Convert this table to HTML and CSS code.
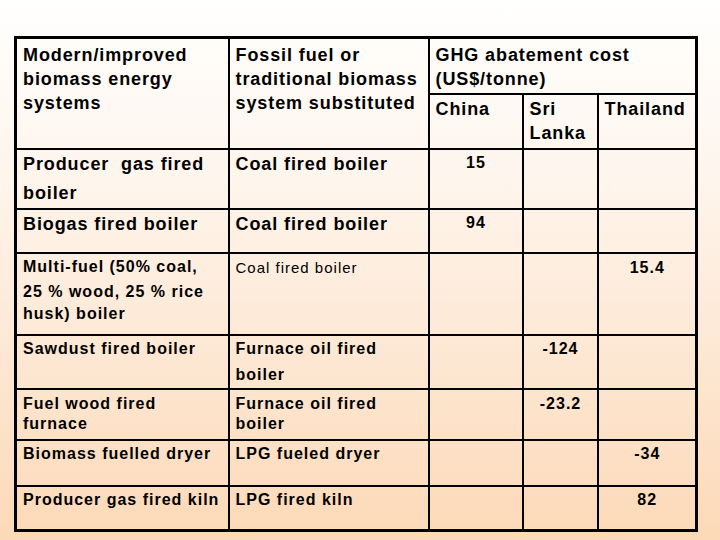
FILE: index.html
```html
<!DOCTYPE html>
<html>
<head>
<meta charset="utf-8">
<link rel="stylesheet" href="styles.css">
</head>
<body>
<table class="ghg">
  <colgroup>
    <col class="c1"><col class="c2"><col class="c3"><col class="c4"><col class="c5">
  </colgroup>
  <tr class="h1">
    <td rowspan="2" class="big">Modern/improved<br>biomass energy<br>systems</td>
    <td rowspan="2" class="big">Fossil fuel or<br>traditional biomass<br>system substituted</td>
    <td colspan="3" class="big">GHG abatement cost<br>(US$/tonne)</td>
  </tr>
  <tr class="h2">
    <td class="big">China</td>
    <td class="big">Sri<br>Lanka</td>
    <td class="big">Thailand</td>
  </tr>
  <tr class="r1">
    <td class="big tall">Producer&nbsp; gas fired<br>boiler</td>
    <td class="big tall">Coal fired boiler</td>
    <td class="num">15</td><td></td><td></td>
  </tr>
  <tr class="r2">
    <td class="big">Biogas fired boiler</td>
    <td class="big">Coal fired boiler</td>
    <td class="num">94</td><td></td><td></td>
  </tr>
  <tr class="r3">
    <td class="mid multi"><span class="l1">Multi-fuel (50% coal,</span><span class="l2">25 % wood, 25 % rice</span><span class="l3">husk) boiler</span></td>
    <td class="plain">Coal fired boiler</td>
    <td></td><td></td><td class="num">15.4</td>
  </tr>
  <tr class="r4">
    <td class="mid">Sawdust fired boiler</td>
    <td class="mid loose">Furnace oil fired<br>boiler</td>
    <td></td><td class="num">-124</td><td></td>
  </tr>
  <tr class="r5">
    <td class="mid tight">Fuel wood fired<br>furnace</td>
    <td class="mid tight">Furnace oil fired<br>boiler</td>
    <td></td><td class="num">-23.2</td><td></td>
  </tr>
  <tr class="r6">
    <td class="mid">Biomass fuelled dryer</td>
    <td class="mid">LPG fueled dryer</td>
    <td></td><td></td><td class="num">-34</td>
  </tr>
  <tr class="r7">
    <td class="mid">Producer gas fired kiln</td>
    <td class="mid">LPG fired kiln</td>
    <td></td><td></td><td class="num">82</td>
  </tr>
</table>
</body>
</html>
```

FILE: styles.css
```css
html, body {
  margin: 0;
  padding: 0;
}
body {
  width: 720px;
  height: 540px;
  overflow: hidden;
  background: linear-gradient(180deg, #fffffe 0%, #fef6ee 30%, #fde9d6 62%, #fcd9b7 100%);
  font-family: "Liberation Sans", Arial, sans-serif;
  color: #000;
  padding: 36px 0 0 14px;
  box-sizing: border-box;
}
.ghg {
  border-collapse: collapse;
  table-layout: fixed;
  width: 683px;
  border: 3px solid #000;
}
.c1 { width: 213px; }
.c2 { width: 200px; }
.c3 { width: 94px; }
.c4 { width: 75px; }
.c5 { width: 99px; }
.ghg td {
  border: 2px solid #000;
  vertical-align: top;
  padding: 3px 5px 0 6px;
  font-weight: bold;
  letter-spacing: 1px;
  white-space: nowrap;
}
.big {
  font-size: 18px;
  line-height: 24px;
}
.ghg td.big {
  letter-spacing: 0.9px;
}
.big.tall {
  line-height: 29px;
}
.mid {
  font-size: 16px;
  line-height: 20px;
}
.mid.loose {
  line-height: 26px;
}
.num {
  font-size: 16px;
  line-height: 20px;
  text-align: center;
}
.ghg td.plain {
  font-size: 15px;
  line-height: 20px;
  font-weight: normal;
  letter-spacing: 1px;
}
.multi span {
  display: block;
}
.multi .l1 { height: 25px; }
.multi .l2 { height: 22px; }
.ghg tr.h1 { height: 56px; }
.ghg tr.h2 { height: 55px; }
.ghg tr.r1 { height: 60px; }
.ghg tr.r2 { height: 44px; }
.ghg tr.r3 { height: 82px; }
.ghg tr.r4 { height: 54px; }
.ghg tr.r5 { height: 51px; }
.ghg tr.r6 { height: 46px; }
.ghg tr.r7 { height: 45px; }
.ghg tr.h1 td { padding-top: 4px; }
.ghg tr.h2 td { padding-top: 2px; }
.ghg tr.r1 td { padding-top: 3px; }
.ghg tr.r1 td.tall { padding-top: 0; }
.ghg tr.r2 td { padding-top: 3px; }
.ghg tr.r2 td.big { padding-top: 2px; }
.ghg tr.r3 td { padding-top: 4px; }
.ghg tr.r3 td.multi { padding-top: 3px; }
.ghg tr.r4 td { padding-top: 3px; }
.ghg tr.r4 td.loose { padding-top: 0; }
.ghg tr.r5 td { padding-top: 4px; }
.ghg tr.r6 td { padding-top: 3px; }
.ghg tr.r7 td { padding-top: 3px; }
```
